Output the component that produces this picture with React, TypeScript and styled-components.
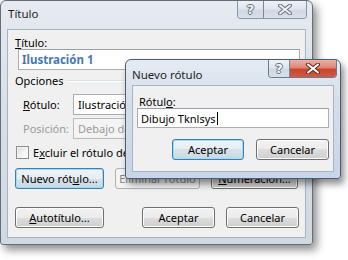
import styled, { createGlobalStyle } from 'styled-components';

const Global = createGlobalStyle`
  html, body {
    margin: 0;
    padding: 0;
    background: #ffffff;
  }
  body {
    font-family: "Noto Sans", "Open Sans", sans-serif;
    font-size: 11px;
    color: #000;
  }
`;

const Desktop = styled.div`
  position: relative;
  width: 348px;
  height: 260px;
  overflow: hidden;
  background: #fff;
`;

const Win = styled.div<{ $active?: boolean }>`
  display: flex;
  flex-direction: column;
  box-sizing: border-box;
  border: 1px solid ${(p) => (p.$active ? '#4f5c6c' : '#646d78')};
  border-radius: 6px 6px 3px 3px;
  background: ${(p) =>
    p.$active
      ? 'linear-gradient(#e4ebf3 0%, #d4dfeb 35%, #c6d6e8 100%)'
      : 'linear-gradient(#e6ebf1 0%, #d9e0e8 40%, #d0d8e2 100%)'};
  box-shadow: ${(p) =>
    p.$active
      ? '3px 5px 7px rgba(0, 0, 0, 0.45)'
      : '4px 5px 8px rgba(0, 0, 0, 0.45)'};
`;

const OuterWin = styled(Win)`
  width: 313px;
  height: 245px;
`;

const InnerWin = styled(Win)`
  position: absolute;
  left: 125px;
  top: 59px;
  width: 216px;
  height: 120px;
`;

const TitleBar = styled.div<{ $h: number }>`
  display: flex;
  justify-content: space-between;
  align-items: flex-start;
  height: ${(p) => p.$h}px;
  flex-shrink: 0;
`;

const TitleText = styled.span<{ $pad: number; $left: number }>`
  padding: ${(p) => p.$pad}px 0 0 ${(p) => p.$left}px;
  font-size: 11.5px;
  line-height: 14px;
  color: #1e1e1e;
`;

const Caption = styled.div<{ $right: number; $active?: boolean }>`
  display: flex;
  height: 17px;
  margin-right: ${(p) => p.$right}px;
  border: 1px solid ${(p) => (p.$active ? '#6b7a8c' : '#8a96a3')};
  border-top: none;
  border-radius: 0 0 4px 4px;
  overflow: hidden;
`;

const CapBtn = styled.div<{ $w: number; $close?: boolean; $active?: boolean }>`
  width: ${(p) => p.$w}px;
  display: flex;
  align-items: center;
  justify-content: center;
  background: ${(p) =>
    p.$close && p.$active
      ? 'linear-gradient(#eab0a4 0%, #de8676 45%, #c9452f 55%, #cf5b3f 100%)'
      : 'linear-gradient(#eef2f6 0%, #dfe6ee 45%, #cfd8e3 55%, #d8e0ea 100%)'};
  & + & {
    border-left: 1px solid ${(p) => (p.$active ? '#7b8897' : '#98a3af')};
  }
`;

const HelpGlyph = styled.span<{ $active?: boolean }>`
  font-family: "DejaVu Sans", sans-serif;
  font-weight: bold;
  font-size: 13px;
  line-height: 13px;
  color: ${(p) => (p.$active ? '#f6f8fa' : '#eef1f4')};
  text-shadow: -1px 0 #66707c, 1px 0 #66707c, 0 -1px #66707c, 0 1px #66707c;
`;

const Client = styled.div<{ $pt: number }>`
  flex: 1;
  margin: 0 6px 6px;
  background: #f0f0f0;
  border: 1px solid #a6b3c2;
  display: flex;
  flex-direction: column;
  padding-top: ${(p) => p.$pt}px;
`;

const Label = styled.div<{ $left: number }>`
  padding-left: ${(p) => p.$left}px;
  line-height: 13px;
  white-space: nowrap;
`;

const Key = styled.span`
  text-decoration: underline;
  text-underline-offset: 1px;
`;

const TextBox = styled.div<{ $left: number; $w: number; $h: number; $bold?: boolean }>`
  box-sizing: border-box;
  margin-left: ${(p) => p.$left}px;
  width: ${(p) => p.$w}px;
  height: ${(p) => p.$h}px;
  border: 1px solid #abadb3;
  border-top-color: #9aa0a8;
  background: #fff;
  padding: 0 3px;
  display: flex;
  align-items: center;
  font-weight: ${(p) => (p.$bold ? 700 : 400)};
  color: ${(p) => (p.$bold ? '#4677b5' : '#000')};
  font-size: ${(p) => (p.$bold ? '11.5px' : '11px')};
  white-space: nowrap;
  overflow: hidden;
`;

const Caret = styled.span`
  display: inline-block;
  width: 1px;
  height: 13px;
  background: #000;
  margin-left: 1px;
`;

const Group = styled.div`
  display: flex;
  align-items: center;
  margin-top: 4px;
  padding-left: 7px;
  padding-right: 5px;
  line-height: 14px;

  &::after {
    content: '';
    flex: 1;
    margin-left: 4px;
    border-top: 1px solid #d5dfe5;
    border-bottom: 1px solid #fff;
  }
`;

const FieldRow = styled.div<{ $mt: number }>`
  display: flex;
  align-items: center;
  margin-top: ${(p) => p.$mt}px;
  padding-left: 15px;
`;

const FieldLabel = styled.span<{ $disabled?: boolean }>`
  width: 50px;
  color: ${(p) => (p.$disabled ? '#9a9a9a' : '#000')};
`;

const Combo = styled.div<{ $disabled?: boolean }>`
  box-sizing: border-box;
  width: 226px;
  height: 21px;
  border: 1px solid ${(p) => (p.$disabled ? '#b8bcc0' : '#abadb3')};
  background: ${(p) => (p.$disabled ? '#f4f4f4' : '#fff')};
  color: ${(p) => (p.$disabled ? '#9a9a9a' : '#000')};
  padding: 0 4px;
  display: flex;
  align-items: center;
  white-space: nowrap;
`;

const CheckRow = styled.label`
  display: flex;
  align-items: center;
  margin-top: 6px;
  padding-left: 8px;
  gap: 4px;
  white-space: nowrap;
`;

const Box = styled.span`
  box-sizing: border-box;
  width: 13px;
  height: 13px;
  border: 1px solid #8e8f8f;
  background: linear-gradient(135deg, #dcdcdc 0%, #f4f4f4 60%, #ffffff 100%);
  box-shadow: inset 0 0 0 1px #f4f4f4;
`;

const BtnRow = styled.div<{ $mt: number; $left: number }>`
  display: flex;
  margin-top: ${(p) => p.$mt}px;
  padding-left: ${(p) => p.$left}px;
`;

const Btn = styled.div<{ $w: number; $gap?: number; $def?: boolean; $disabled?: boolean }>`
  box-sizing: border-box;
  width: ${(p) => p.$w}px;
  height: 21px;
  margin-left: ${(p) => p.$gap ?? 0}px;
  flex-shrink: 0;
  display: flex;
  align-items: center;
  justify-content: center;
  border-radius: 3px;
  white-space: nowrap;
  border: 1px solid ${(p) => (p.$disabled ? '#adb2b5' : p.$def ? '#3c7fb1' : '#707070')};
  color: ${(p) => (p.$disabled ? '#838383' : '#000')};
  background: ${(p) =>
    p.$disabled
      ? '#f4f4f4'
      : p.$def
      ? 'linear-gradient(#eef4f8 0%, #e6eef3 50%, #d6e2ea 50%, #cbd9e2 100%)'
      : 'linear-gradient(#f2f2f2 0%, #ebebeb 50%, #dddddd 50%, #cfcfcf 100%)'};
  box-shadow: inset 0 0 0 1px ${(p) => (p.$disabled ? '#f4f4f4' : p.$def ? '#9fdcf6' : '#fcfcfc')};
`;

const CloseX = ({ active }: { active?: boolean }) => (
  <svg width="14" height="11" viewBox="0 0 14 11">
    <path d="M2 1.5 L12 9.5 M12 1.5 L2 9.5" stroke={active ? '#6e2a20' : '#6a7480'} strokeWidth="4" strokeLinecap="round" fill="none" />
    <path d="M2 1.5 L12 9.5 M12 1.5 L2 9.5" stroke={active ? '#ffffff' : '#eef1f4'} strokeWidth="2" strokeLinecap="round" fill="none" />
  </svg>
);

export default function App() {
  return (
    <Desktop>
      <Global />
      <OuterWin>
        <TitleBar $h={28}>
          <TitleText $pad={6} $left={7}>Título</TitleText>
          <Caption $right={5}>
            <CapBtn $w={25}>
              <HelpGlyph>?</HelpGlyph>
            </CapBtn>
            <CapBtn $w={42} $close>
              <CloseX />
            </CapBtn>
          </Caption>
        </TitleBar>
        <Client $pt={6}>
          <Label $left={7}>
            <Key>T</Key>ítulo:
          </Label>
          <TextBox $left={10} $w={282} $h={21} $bold>
            Ilustración 1
          </TextBox>
          <Group>Opciones</Group>
          <FieldRow $mt={6}>
            <FieldLabel>
              <Key>R</Key>ótulo:
            </FieldLabel>
            <Combo>Ilustración</Combo>
          </FieldRow>
          <FieldRow $mt={3}>
            <FieldLabel $disabled>Posición:</FieldLabel>
            <Combo $disabled>Debajo de la</Combo>
          </FieldRow>
          <CheckRow>
            <Box />
            <span>
              E<Key>x</Key>cluir el rótulo del
            </span>
          </CheckRow>
          <BtnRow $mt={8} $left={7}>
            <Btn $w={89} $def>
              Nuevo rót<Key>u</Key>lo...
            </Btn>
            <Btn $w={85} $gap={11} $disabled>
              Eliminar rótulo
            </Btn>
            <Btn $w={87} $gap={11}>
              <Key>N</Key>umeración...
            </Btn>
          </BtnRow>
          <BtnRow $mt={18} $left={7}>
            <Btn $w={89}>
              <Key>A</Key>utotítulo...
            </Btn>
            <Btn $w={73} $gap={38}>
              Aceptar
            </Btn>
            <Btn $w={73} $gap={11}>
              Cancelar
            </Btn>
          </BtnRow>
        </Client>
      </OuterWin>

      <InnerWin $active>
        <TitleBar $h={25}>
          <TitleText $pad={8} $left={6}>Nuevo rótulo</TitleText>
          <Caption $right={3} $active>
            <CapBtn $w={20} $active>
              <HelpGlyph $active>?</HelpGlyph>
            </CapBtn>
            <CapBtn $w={46} $close $active>
              <CloseX active />
            </CapBtn>
          </Caption>
        </TitleBar>
        <Client $pt={9}>
          <Label $left={6}>
            Rótul<Key>o</Key>:
          </Label>
          <TextBox $left={4} $w={192} $h={20}>
            Dibujo Tknlsys
            <Caret />
          </TextBox>
          <BtnRow $mt={11} $left={39}>
            <Btn $w={72} $def>
              Aceptar
            </Btn>
            <Btn $w={73} $gap={12}>
              Cancelar
            </Btn>
          </BtnRow>
        </Client>
      </InnerWin>
    </Desktop>
  );
}
